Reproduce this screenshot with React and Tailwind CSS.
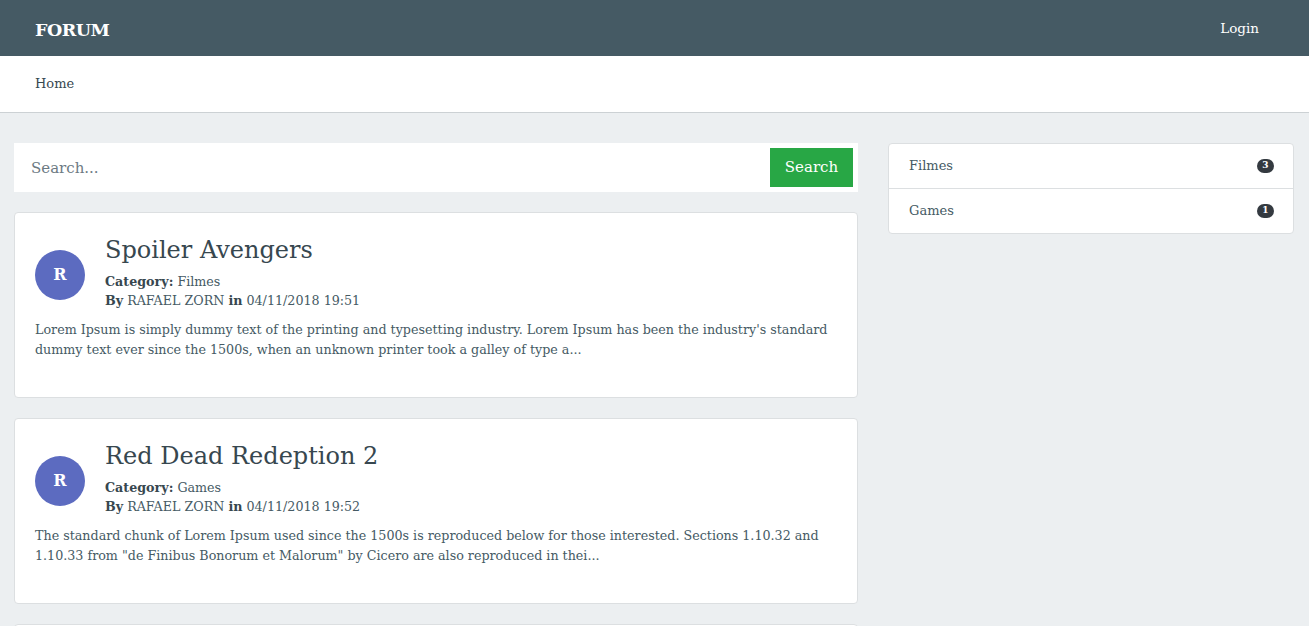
import React from "react";

const posts = [
  {
    id: 1,
    title: "Spoiler Avengers",
    category: "Filmes",
    author: "RAFAEL ZORN",
    date: "04/11/2018 19:51",
    body: "Lorem Ipsum is simply dummy text of the printing and typesetting industry. Lorem Ipsum has been the industry's standard dummy text ever since the 1500s, when an unknown printer took a galley of type a...",
  },
  {
    id: 2,
    title: "Red Dead Redeption 2",
    category: "Games",
    author: "RAFAEL ZORN",
    date: "04/11/2018 19:52",
    body: 'The standard chunk of Lorem Ipsum used since the 1500s is reproduced below for those interested. Sections 1.10.32 and 1.10.33 from "de Finibus Bonorum et Malorum" by Cicero are also reproduced in thei...',
  },
  {
    id: 3,
    title: "Novo post",
    category: "Filmes",
    author: "RAFAEL ZORN",
    date: "04/11/2018 19:53",
    body: "Lorem Ipsum is simply dummy text of the printing and typesetting industry.",
  },
];

const categories = [
  { name: "Filmes", count: 3 },
  { name: "Games", count: 1 },
];

const font = { fontFamily: '"DejaVu Serif", "Liberation Serif", serif' };

const App = () => {
  return (
    <div className="min-h-screen bg-[#eceff1] text-[#455a64]" style={font}>
      {/* top navbar */}
      <nav className="h-[56px] bg-[#455a64] flex items-center justify-between pl-[35px] pr-[50px]">
        <span className="text-white font-bold text-[17.5px] tracking-[-0.5px] pt-[5px]">FORUM</span>
        <span className="text-white text-[13.5px]">Login</span>
      </nav>

      {/* breadcrumb bar */}
      <div className="h-[57px] bg-white border-b border-[#ccd1d4] flex items-center pl-[35px] text-[13px] text-[#37474f]">
        Home
      </div>

      <div className="flex gap-[30px] pl-[14px] pr-[15px] pt-[30px]">
        {/* posts column */}
        <div className="w-[844px] flex flex-col gap-[20px]">
          <div className="bg-white h-[49px] flex items-center p-[5px]">
            <input
              className="flex-1 h-full pl-[12px] text-[15px] text-[#455a64] placeholder-[#6c7a83] outline-none"
              placeholder="Search..."
            />
            <button className="h-[39px] w-[83px] bg-[#28a745] text-white text-[15px]">
              Search
            </button>
          </div>

          {posts.map((post) => (
            <div
              key={post.id}
              className="bg-white border border-[#dcdfe1] rounded-[4px] h-[186px] px-[20px] pt-[22px]"
            >
              <div className="flex items-center gap-[20px]">
                <div className="w-[50px] h-[50px] rounded-full bg-[#5c6bc0] flex items-center justify-center text-white font-bold text-[16px] shrink-0 mt-[4px]">
                  R
                </div>
                <div>
                  <h3 className="text-[24px] leading-[30px] text-[#37474f]">{post.title}</h3>
                  <div className="text-[12.7px] leading-[19px] mt-[7px]">
                    <b className="text-[#37474f]">Category:</b> {post.category}
                  </div>
                  <div className="text-[12.7px] leading-[19px]">
                    <b className="text-[#37474f]">By</b> {post.author}{" "}
                    <b className="text-[#37474f]">in</b> {post.date}
                  </div>
                </div>
              </div>
              <p className="text-[12.7px] leading-[20px] mt-[10px]">{post.body}</p>
            </div>
          ))}
        </div>

        {/* categories */}
        <div className="flex-1">
          <ul className="bg-white border border-[#dcdfe1] rounded-[4px]">
            {categories.map((c, i) => (
              <li
                key={c.name}
                className={
                  "h-[44px] flex items-center justify-between pl-[20px] pr-[19px] text-[13px] " +
                  (i > 0 ? "border-t border-[#dcdfe1] h-[45px]" : "")
                }
              >
                <span>{c.name}</span>
                <span className="bg-[#343a40] text-white text-[9px] font-bold rounded-full w-[17px] h-[14px] flex items-center justify-center">
                  {c.count}
                </span>
              </li>
            ))}
          </ul>
        </div>
      </div>
    </div>
  );
};

export default App;
